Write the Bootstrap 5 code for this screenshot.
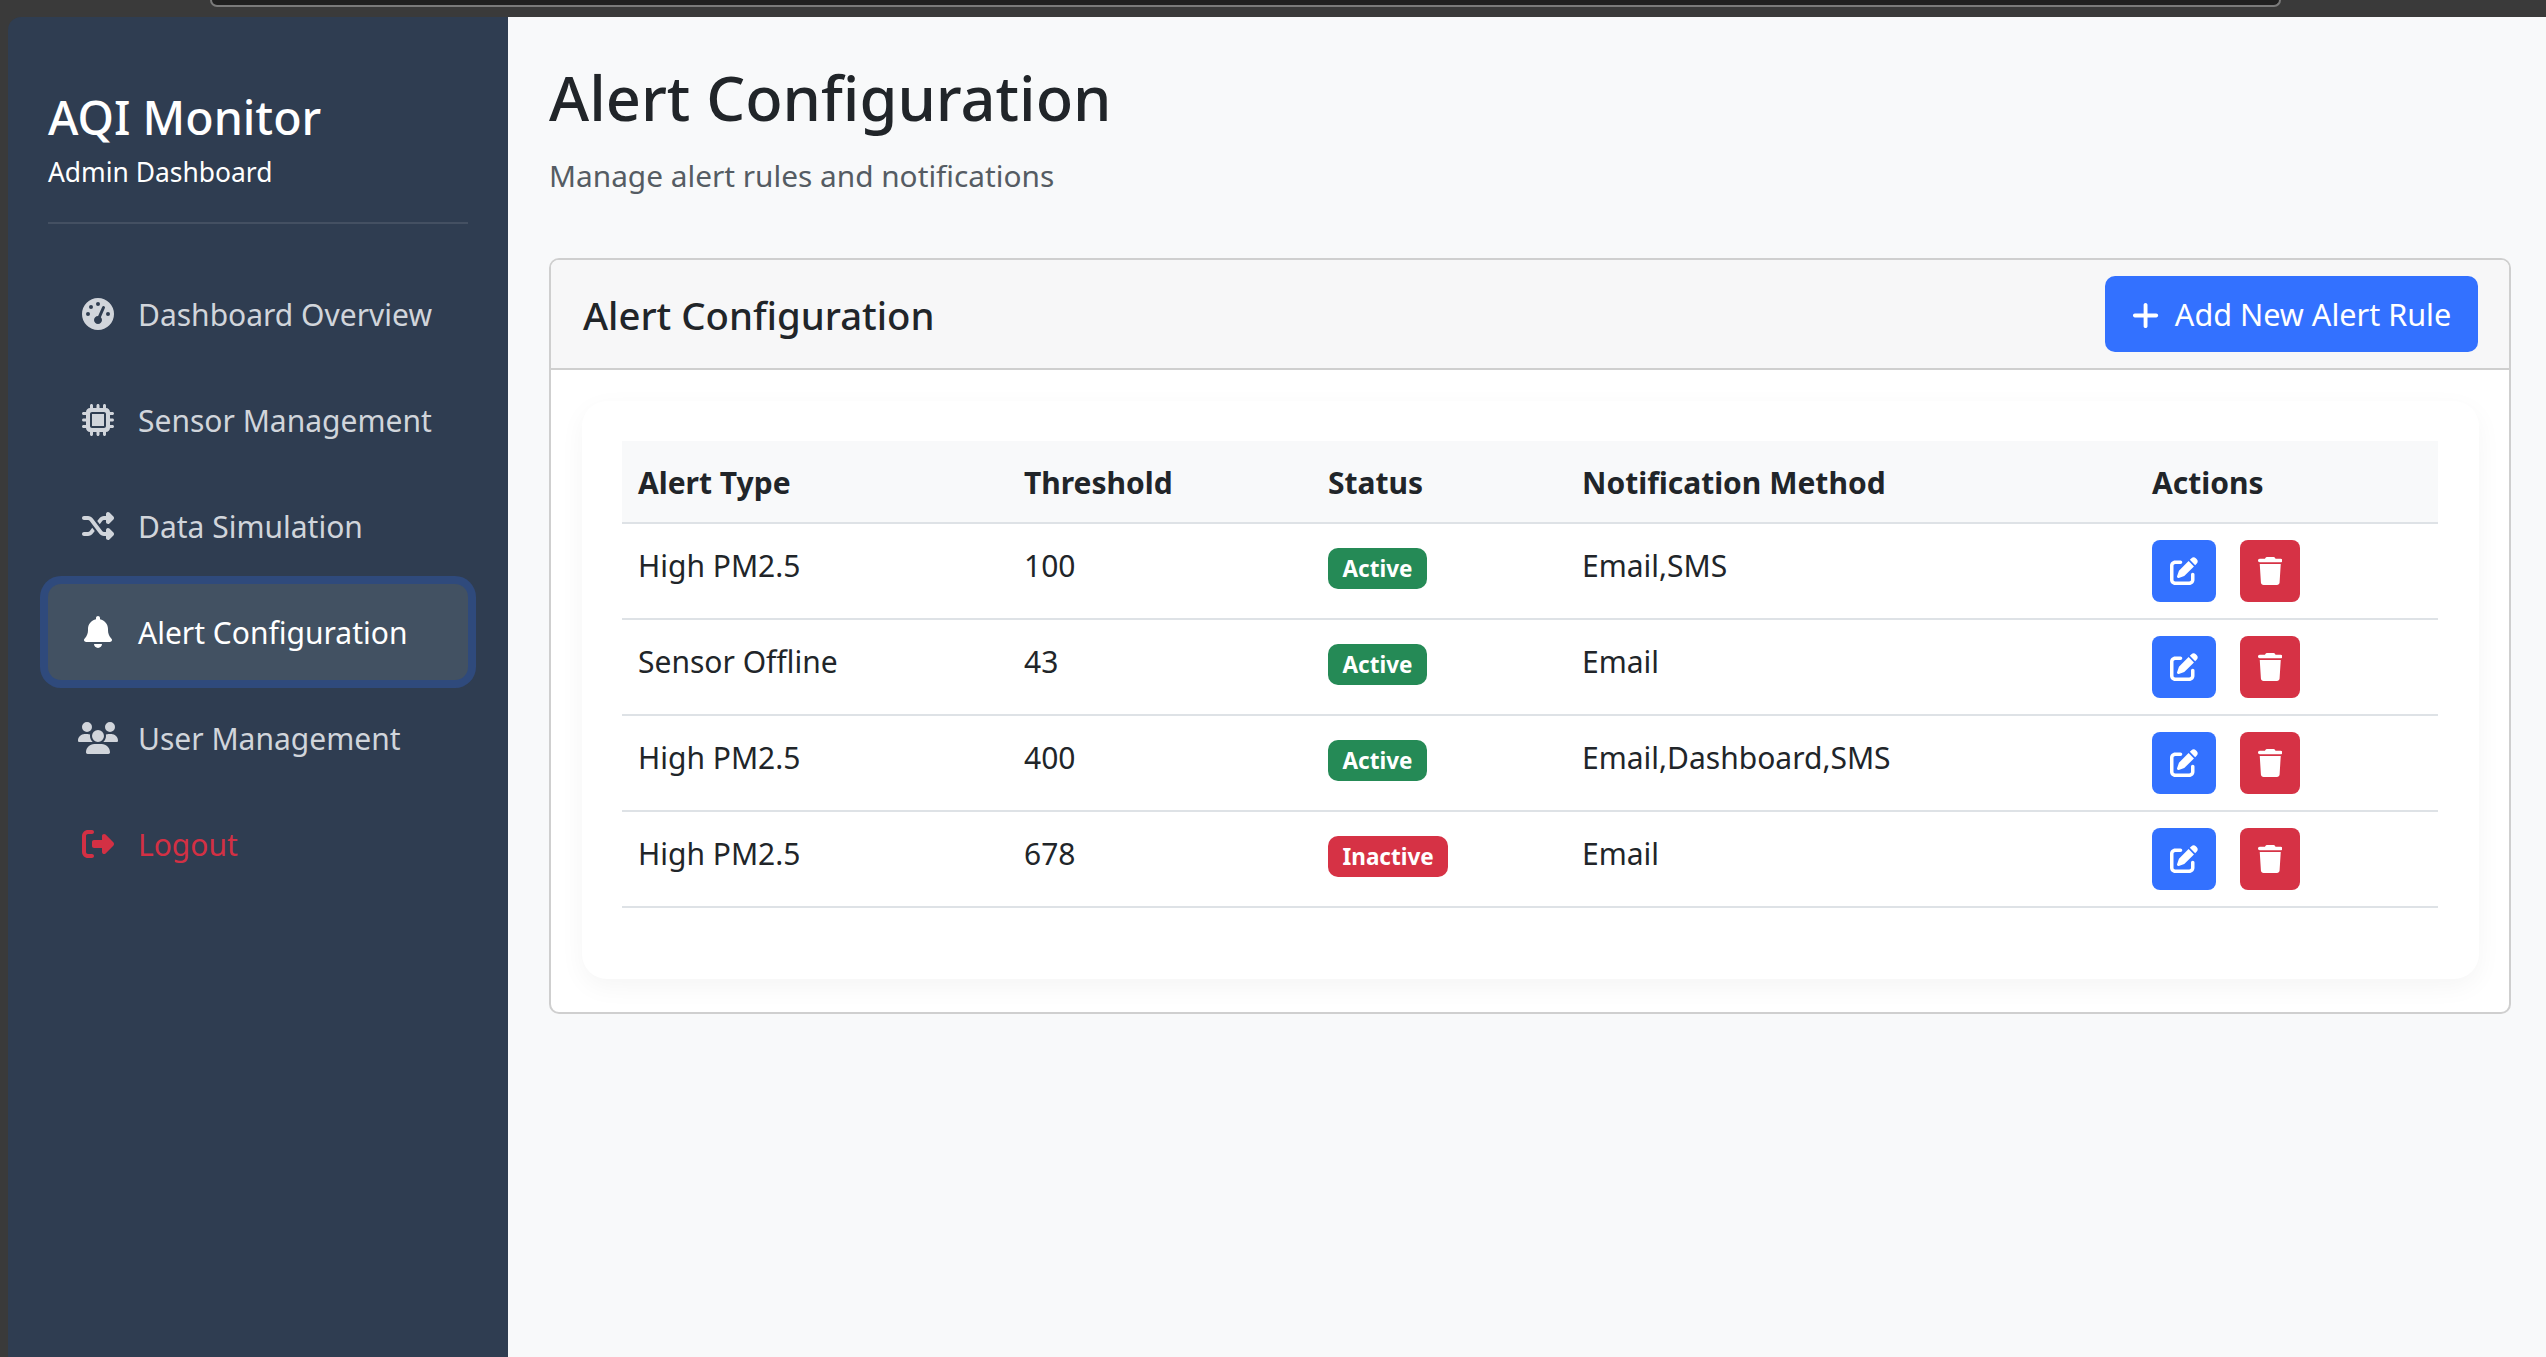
<!DOCTYPE html>
<html lang="en">

<head>
    <meta charset="UTF-8">
    <meta name="viewport" content="width=device-width, initial-scale=1.0">
    <link rel="stylesheet" href="https://cdn.jsdelivr.net/npm/bootstrap@5.3.3/dist/css/bootstrap.min.css">
    <script src="https://cdn.jsdelivr.net/npm/bootstrap@5.3.3/dist/js/bootstrap.bundle.min.js"></script>
    <title>AQI Monitor - Alert Configuration</title>
    <style>
        html, body { height: 100%; }
        body { background: #3a3a3a; font-family: "Noto Sans", "Open Sans", sans-serif; font-size: 26px; color: #212529; overflow: hidden; }
        .top-strip { height: 17px; flex: none; }
        .tab-pill { height: 7px; margin-left: 210px; width: 2071px; background: #202020; border: 2px solid #7a7a7a; border-top: 0; border-radius: 0 0 14px 14px; }
        .app-shell { padding-left: 8px; min-height: 0; }

        .side-bar { width: 500px; flex: none; background: #2f3d51; border-top-left-radius: 13px; padding: 0 40px; }
        .side-head { padding-top: 73px; height: 207px; border-bottom: 2px solid rgba(255, 255, 255, .1); }
        .side-title { font-size: 46.5px; font-weight: 500; line-height: 1.2; margin-bottom: 7px; }
        .side-sub { font-size: 26.4px; line-height: 1.5; }
        .side-nav { padding-top: 42px; gap: 10px; }
        .side-link { height: 96px; padding: 0 0 0 30px; gap: 20px; color: #d1d5db; border-radius: 13px; font-size: 30px; }
        .side-link:hover, .side-link:focus { color: #d1d5db; }
        .side-link.current { color: #fff; background: #425162; box-shadow: 0 0 0 8px #2f4a7c; }
        .side-link.out { color: #d33044; }
        .ico-box { width: 40px; height: 40px; flex: none; display: flex; align-items: center; justify-content: center; }
        .ico-box svg { height: 32px; fill: currentColor; display: block; }

        .page-main { background: #f8f9fa; padding: 0 35px 0 41px; min-width: 0; }
        .page-title { font-size: 61.3px; font-weight: 500; line-height: 1.2; margin: 0; padding-top: 44px; }
        .page-sub { font-size: 29.8px; color: #555c63; margin: 0; padding-top: 19px; height: 123px; line-height: 1.5; }

        .rule-card { border: 2px solid #cfcfcf; border-radius: 10px; background: #fff; height: 756px; }
        .rule-head { height: 110px; background: #f7f7f8; border-bottom: 2px solid #cfcfcf; padding: 0 31px 0 32px; border-radius: 8px 8px 0 0; }
        .rule-head h5 { font-size: 38.3px; font-weight: 500; margin: 0; padding-top: 4px; }
        .add-btn { height: 76px; width: 373px; background: #3371ff; border: 0; border-radius: 10px; color: #fff; font-size: 30.6px; gap: 16px; padding: 3px 0 0; }
        .add-btn:hover { background: #3371ff; color: #fff; }
        .add-btn svg { height: 31px; fill: #fff; }
        .rule-body { padding: 31px 30px 32px 31px; }
        .inner-panel { background: #fff; border-radius: 25px; box-shadow: 0 8px 26px rgba(0, 0, 0, .045); padding: 40px; height: 578px; }

        .rule-table { margin: 0; table-layout: fixed; width: 1816px; border-color: #dee2e6; }
        .rule-table th { background: #f8f9fa; height: 82px; padding: 3px 16px 0; vertical-align: middle; font-weight: 700; font-size: 30px; border-bottom-width: 2px; }
        .rule-table td { height: 96px; padding: 19px 16px 0; border-bottom-width: 2px; vertical-align: top; font-size: 30px; line-height: 1.5; }
        .rule-table td.tag-cell { padding-top: 24px; }
        .rule-table td.act-cell { padding-top: 16px; }
        .tag { display: inline-block; height: 41px; line-height: 41px; padding: 0 14.5px; border-radius: 10px; color: #fff; font-weight: 700; font-size: 22.5px; vertical-align: top; }
        .tag-on { background: #258a56; }
        .tag-off { background: #d63245; }
        .act-btn { height: 62px; border: 0; border-radius: 8px; padding: 0; display: inline-flex; align-items: center; justify-content: center; }
        .act-btn svg { height: 28px; fill: #fff; }
        .act-edit, .act-edit:hover { width: 64px; background: #3371ff; margin-right: 24px; }
        .act-del, .act-del:hover { width: 60px; background: #d63245; }
    </style>
</head>

<body class="d-flex flex-column">

    <div class="top-strip"><div class="tab-pill"></div></div>

    <div class="app-shell d-flex flex-grow-1">
        <div class="side-bar text-white">
            <div class="side-head">
                <div class="side-title">AQI Monitor</div>
                <div class="side-sub">Admin Dashboard</div>
            </div>
            <nav class="nav flex-column side-nav">
                <a class="nav-link side-link d-flex align-items-center" href="#">
                    <span class="ico-box"><svg viewBox="0 0 512 512"><path d="M0 256a256 256 0 1 1 512 0A256 256 0 1 1 0 256zM288 96a32 32 0 1 0 -64 0 32 32 0 1 0 64 0zM256 416c35.3 0 64-28.7 64-64c0-17.4-6.9-33.1-18.1-44.6L366 161.7c5.3-12.1-.2-26.3-12.3-31.6s-26.3 .2-31.6 12.3L257.9 288c-.6 0-1.3 0-1.9 0c-35.3 0-64 28.7-64 64s28.7 64 64 64zM176 144a32 32 0 1 0 -64 0 32 32 0 1 0 64 0zM96 288a32 32 0 1 0 0-64 32 32 0 1 0 0 64zm352-32a32 32 0 1 0 -64 0 32 32 0 1 0 64 0z"/></svg></span>
                    Dashboard Overview
                </a>
                <a class="nav-link side-link d-flex align-items-center" href="#">
                    <span class="ico-box"><svg viewBox="0 0 512 512"><path d="M176 24c0-13.3-10.7-24-24-24s-24 10.7-24 24V64c-35.3 0-64 28.7-64 64H24c-13.3 0-24 10.7-24 24s10.7 24 24 24H64v56H24c-13.3 0-24 10.7-24 24s10.7 24 24 24H64v56H24c-13.3 0-24 10.7-24 24s10.7 24 24 24H64c0 35.3 28.7 64 64 64v40c0 13.3 10.7 24 24 24s24-10.7 24-24V448h56v40c0 13.3 10.7 24 24 24s24-10.7 24-24V448h56v40c0 13.3 10.7 24 24 24s24-10.7 24-24V448c35.3 0 64-28.7 64-64h40c13.3 0 24-10.7 24-24s-10.7-24-24-24H448V280h40c13.3 0 24-10.7 24-24s-10.7-24-24-24H448V176h40c13.3 0 24-10.7 24-24s-10.7-24-24-24H448c0-35.3-28.7-64-64-64V24c0-13.3-10.7-24-24-24s-24 10.7-24 24V64H280V24c0-13.3-10.7-24-24-24s-24 10.7-24 24V64H176V24zM160 128H352c17.7 0 32 14.3 32 32V352c0 17.7-14.3 32-32 32H160c-17.7 0-32-14.3-32-32V160c0-17.7 14.3-32 32-32zm192 32H160V352H352V160z"/></svg></span>
                    Sensor Management
                </a>
                <a class="nav-link side-link d-flex align-items-center" href="#">
                    <span class="ico-box"><svg viewBox="0 0 512 512"><path d="M403.8 34.4c12-5 25.7-2.2 34.9 6.9l64 64c6 6 9.4 14.1 9.4 22.6s-3.4 16.6-9.4 22.6l-64 64c-9.2 9.2-22.9 11.9-34.9 6.9s-19.8-16.6-19.8-29.6V160H352c-10.1 0-19.6 4.7-25.6 12.8L284 229.3 244 176l31.2-41.6C293.3 110.2 321.8 96 352 96h32V64c0-12.9 7.8-24.6 19.8-29.6zM164 282.7L204 336l-31.2 41.6C154.7 401.8 126.2 416 96 416H32c-17.7 0-32-14.3-32-32s14.3-32 32-32H96c10.1 0 19.6-4.7 25.6-12.8L164 282.7zm274.6 188c-9.2 9.2-22.9 11.9-34.9 6.9s-19.8-16.6-19.8-29.6V416H352c-30.2 0-58.7-14.2-76.8-38.4L121.6 172.8c-6-8.1-15.5-12.8-25.6-12.8H32c-17.7 0-32-14.3-32-32s14.3-32 32-32H96c30.2 0 58.7 14.2 76.8 38.4L326.4 339.2c6 8.1 15.5 12.8 25.6 12.8h32V320c0-12.9 7.8-24.6 19.8-29.6s25.7-2.2 34.9 6.9l64 64c6 6 9.4 14.1 9.4 22.6s-3.4 16.6-9.4 22.6l-64 64z"/></svg></span>
                    Data Simulation
                </a>
                <a class="nav-link side-link current d-flex align-items-center" href="#">
                    <span class="ico-box"><svg viewBox="0 0 448 512"><path d="M224 0c-17.7 0-32 14.3-32 32V51.2C119 66 64 130.6 64 208v18.8c0 47-17.3 92.4-48.5 127.6l-7.4 8.3c-8.4 9.4-10.4 22.9-5.3 34.4S19.4 416 32 416H416c12.6 0 24-7.4 29.2-18.9s3.1-25-5.3-34.4l-7.4-8.3C401.3 319.2 384 273.9 384 226.8V208c0-77.4-55-142-128-156.8V32c0-17.7-14.3-32-32-32zm45.3 493.3c12-12 18.7-28.3 18.7-45.3H224 160c0 17 6.7 33.3 18.7 45.3s28.3 18.7 45.3 18.7s33.3-6.7 45.3-18.7z"/></svg></span>
                    Alert Configuration
                </a>
                <a class="nav-link side-link d-flex align-items-center" href="#">
                    <span class="ico-box"><svg viewBox="0 0 640 512"><path d="M144 0a80 80 0 1 1 0 160A80 80 0 1 1 144 0zM512 0a80 80 0 1 1 0 160A80 80 0 1 1 512 0zM0 298.7C0 239.8 47.8 192 106.7 192h42.7c15.9 0 31 3.5 44.6 9.7c-1.3 7.2-1.9 14.7-1.9 22.3c0 38.2 16.8 72.5 43.3 96c-.2 0-.4 0-.7 0H21.3C9.6 320 0 310.4 0 298.7zM405.3 320c-.2 0-.4 0-.7 0c26.6-23.5 43.3-57.8 43.3-96c0-7.6-.7-15-1.9-22.3c13.6-6.3 28.7-9.7 44.6-9.7h42.7C592.2 192 640 239.8 640 298.7c0 11.8-9.6 21.3-21.3 21.3H405.3zM224 224a96 96 0 1 1 192 0 96 96 0 1 1 -192 0zM128 485.3C128 411.7 187.7 352 261.3 352H378.7C452.3 352 512 411.7 512 485.3c0 14.7-11.9 26.7-26.7 26.7H154.7c-14.7 0-26.7-11.9-26.7-26.7z"/></svg></span>
                    User Management
                </a>
                <a class="nav-link side-link out d-flex align-items-center" href="#">
                    <span class="ico-box"><svg viewBox="0 0 512 512"><path d="M377.9 105.9L500.7 228.7c7.2 7.2 11.3 17.1 11.3 27.3s-4.1 20.1-11.3 27.3L377.9 406.1c-6.4 6.4-15 9.9-24 9.9c-18.7 0-33.9-15.2-33.9-33.9l0-62.1-128 0c-17.7 0-32-14.3-32-32l0-64c0-17.7 14.3-32 32-32l128 0 0-62.1c0-18.7 15.2-33.9 33.9-33.9c9 0 17.6 3.6 24 9.9zM160 96L96 96c-17.7 0-32 14.3-32 32l0 256c0 17.7 14.3 32 32 32l64 0c17.7 0 32 14.3 32 32s-14.3 32-32 32l-64 0c-53 0-96-43-96-96L0 128C0 75 43 32 96 32l64 0c17.7 0 32 14.3 32 32s-14.3 32-32 32z"/></svg></span>
                    Logout
                </a>
            </nav>
        </div>

        <div class="page-main flex-grow-1">
            <h1 class="page-title">Alert Configuration</h1>
            <p class="page-sub">Manage alert rules and notifications</p>

            <div class="rule-card">
                <div class="rule-head d-flex justify-content-between align-items-center">
                    <h5>Alert Configuration</h5>
                    <button class="btn add-btn d-flex align-items-center justify-content-center" type="button">
                        <svg viewBox="0 0 448 512"><path d="M256 80c0-17.7-14.3-32-32-32s-32 14.3-32 32V224H48c-17.7 0-32 14.3-32 32s14.3 32 32 32H192V432c0 17.7 14.3 32 32 32s32-14.3 32-32V288H400c17.7 0 32-14.3 32-32s-14.3-32-32-32H256V80z"/></svg>
                        Add New Alert Rule
                    </button>
                </div>
                <div class="rule-body">
                    <div class="inner-panel">
                        <table class="table rule-table">
                            <colgroup>
                                <col style="width: 386px">
                                <col style="width: 304px">
                                <col style="width: 254px">
                                <col style="width: 570px">
                                <col style="width: 302px">
                            </colgroup>
                            <thead>
                                <tr>
                                    <th>Alert Type</th>
                                    <th>Threshold</th>
                                    <th>Status</th>
                                    <th>Notification Method</th>
                                    <th>Actions</th>
                                </tr>
                            </thead>
                            <tbody id="ruleRows"></tbody>
                        </table>
                    </div>
                </div>
            </div>
        </div>
    </div>

    <script>
        const editIcon = '<svg viewBox="0 0 512 512"><path d="M471.6 21.7c-21.9-21.9-57.3-21.9-79.2 0L362.3 51.7l97.9 97.9 30.1-30.1c21.9-21.9 21.9-57.3 0-79.2L471.6 21.7zm-299.2 220c-6.1 6.1-10.8 13.6-13.5 21.9l-29.6 88.8c-2.9 8.6-.6 18.1 5.8 24.6s15.9 8.7 24.6 5.8l88.8-29.6c8.2-2.7 15.7-7.4 21.9-13.5L437.7 172.3 339.7 74.3 172.4 241.7zM96 64C43 64 0 107 0 160V416c0 53 43 96 96 96H352c53 0 96-43 96-96V320c0-17.7-14.3-32-32-32s-32 14.3-32 32v96c0 17.7-14.3 32-32 32H96c-17.7 0-32-14.3-32-32V160c0-17.7 14.3-32 32-32h96c17.7 0 32-14.3 32-32s-14.3-32-32-32H96z"/></svg>'
        const trashIcon = '<svg viewBox="0 0 448 512"><path d="M135.2 17.7L128 32H32C14.3 32 0 46.3 0 64S14.3 96 32 96H416c17.7 0 32-14.3 32-32s-14.3-32-32-32H320l-7.2-14.3C307.4 6.8 296.3 0 284.2 0H163.8c-12.1 0-23.2 6.8-28.6 17.7zM416 128H32L53.2 467c1.6 25.3 22.6 45 47.9 45H346.9c25.3 0 46.3-19.7 47.9-45L416 128z"/></svg>'

        const rules = [
            ["High PM2.5", "100", true, "Email,SMS"],
            ["Sensor Offline", "43", true, "Email"],
            ["High PM2.5", "400", true, "Email,Dashboard,SMS"],
            ["High PM2.5", "678", false, "Email"]
        ]

        let str = ""
        for (let r of rules) {
            str = str + `
            <tr>
                <td>${r[0]}</td>
                <td>${r[1]}</td>
                <td class="tag-cell"><span class="tag ${r[2] ? "tag-on" : "tag-off"}">${r[2] ? "Active" : "Inactive"}</span></td>
                <td>${r[3]}</td>
                <td class="act-cell"><button class="btn act-btn act-edit" type="button">${editIcon}</button><button class="btn act-btn act-del" type="button">${trashIcon}</button></td>
            </tr>`
        }
        document.getElementById("ruleRows").innerHTML = str
    </script>
</body>

</html>
